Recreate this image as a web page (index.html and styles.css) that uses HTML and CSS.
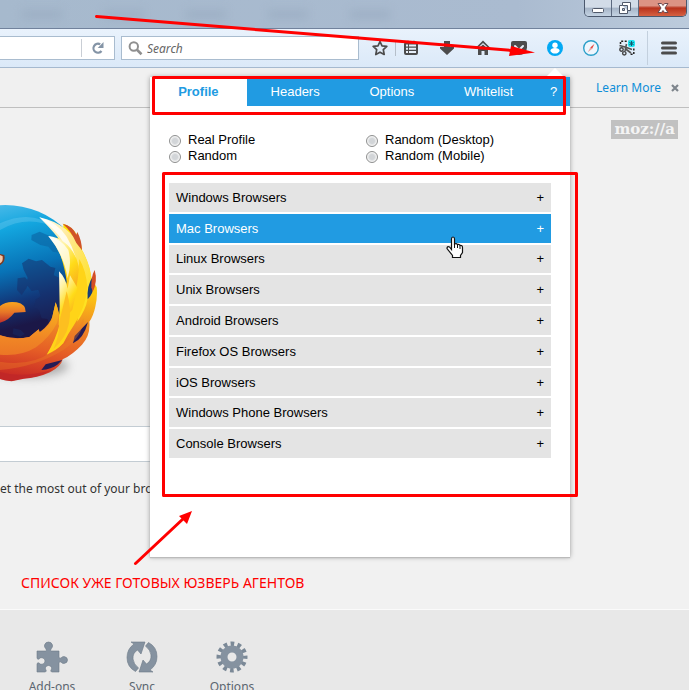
FILE: index.html
```html
<!DOCTYPE html>
<html lang="en">
<head>
<meta charset="utf-8">
<meta name="viewport" content="width=device-width, initial-scale=1">
<title>Mozilla Firefox Start Page</title>
<link rel="stylesheet" href="styles.css">
</head>
<body>
<div class="window">
  <div class="titlebar">
    <div class="ghosts" aria-hidden="true"><i></i><i></i><i></i><i></i><i></i></div>
    <div class="controls">
      <button class="control" aria-label="Minimize"><svg width="14" height="14" viewBox="0 0 14 14"><rect x="1.500" y="7.500" width="11" height="4" rx="1" fill="#fff" stroke="#50596a"/></svg></button>
      <button class="control" aria-label="Restore"><svg width="14" height="14" viewBox="0 0 14 14"><path d="M4.500 1.500h8v8h-3v3h-8v-8h3z" fill="#fff" stroke="#50596a"/><path d="M4.500 4.500h5v5M4.500 7.500h2v2h-2z" fill="#b7c6d8" stroke="#50596a"/></svg></button>
      <button class="control control-close" aria-label="Close"><svg width="14" height="14" viewBox="0 0 14 14"><path d="M2 2.500h3.500L7 4.500l1.500-2H12L9 7l3 4.500H8.500L7 9.500l-1.500 2H2L5 7z" fill="#fff" stroke="#6b4a50"/></svg></button>
    </div>
  </div>

  <nav class="toolbar" aria-label="Navigation">
    <div class="address">
      <input class="address-input" type="text" aria-label="Address">
      <button class="reload" aria-label="Reload"><svg width="14" height="14" viewBox="0 0 14 14"><path d="M10.500 10A4.500 4.500 0 1 1 9.200 3.300" fill="none" stroke="#8494a6" stroke-width="2.200"/><path d="M12.500 1v6H6.700z" fill="#8494a6"/></svg></button>
    </div>
    <div class="search">
      <svg width="15" height="15" viewBox="0 0 15 15"><circle cx="5.800" cy="5.500" r="4.200" fill="none" stroke="#8f8f8f" stroke-width="2"/><path d="M9 8.800l4.500 4.400" stroke="#8f8f8f" stroke-width="2.600"/></svg>
      <input class="search-input" type="text" placeholder="Search" aria-label="Search">
    </div>
    <button class="tool tool-star" aria-label="Bookmark"><svg width="16" height="16" viewBox="0 0 16 16"><path d="M8 1.500l2 4.300 4.800.6-3.500 3.300.9 4.800L8 12.200l-4.200 2.300.9-4.800L1.200 6.400 6 5.800z" fill="none" stroke="#4c4c4c" stroke-width="1.700" stroke-linejoin="round"/></svg></button>
    <span class="divider"></span>
    <button class="tool tool-list" aria-label="Bookmarks list"><svg width="16" height="16" viewBox="0 0 16 16"><path d="M3 2l2-1.500L7 2h2l2-1.500L13 2a2 2 0 0 1 2 2v9a2 2 0 0 1-2 2H3a2 2 0 0 1-2-2V4a2 2 0 0 1 2-2z" fill="#4c4c4c"/><path d="M3 4.500h2v2H3zM6 4.500h7v2H6zM3 7.700h2v2H3zM6 7.700h7v2H6zM3 11h2v2H3zM6 11h7v2H6z" fill="#e7f0fa"/></svg></button>
    <button class="tool" aria-label="Downloads"><svg width="16" height="16" viewBox="0 0 16 16"><path d="M5 1h6v6h4v1.500L8 15 1 8.500V7h4z" fill="#4c4c4c"/></svg></button>
    <button class="tool" aria-label="Home"><svg width="16" height="16" viewBox="0 0 16 16"><path d="M8 .5L15.500 8l-1 1L8 3 1.500 9l-1-1z" fill="#4c4c4c"/><path d="M8 4.500l5 4.500v6H9.500v-4h-3v4H3V9z" fill="#4c4c4c"/></svg></button>
    <button class="tool" aria-label="Pocket"><svg width="16" height="16" viewBox="0 0 16 16"><path d="M2 1h12a2 2 0 0 1 2 2v4.500a8 7.500 0 0 1-16 0V3a2 2 0 0 1 2-2z" fill="#4c4c4c"/><path d="M4 6l4 4 4-4" fill="none" stroke="#e7f0fa" stroke-width="2" stroke-linecap="round"/></svg></button>
    <button class="tool" aria-label="Agent profile"><svg width="16" height="16" viewBox="0 0 16 16"><circle cx="8" cy="8" r="8" fill="#03a9f4"/><circle cx="8" cy="5.300" r="2.700" fill="#fff"/><path d="M3.300 11c0-1.700 2.200-3 4.700-3s4.700 1.300 4.700 3c-1 1.600-2.700 2.600-4.700 2.600S4.300 12.600 3.300 11z" fill="#fff"/></svg></button>
    <button class="tool" aria-label="Compass"><svg width="16" height="16" viewBox="0 0 16 16"><circle cx="8" cy="8" r="7.300" fill="#eef6fd" stroke="#2b9fc9" stroke-width="1.400"/><path d="M11.500 3.800L9 9 7.300 7.600z" fill="#e4473d"/><path d="M7.300 7.600L9 9l-4.200 3.200z" fill="#e9a29d"/></svg></button>
    <button class="tool" aria-label="Capture"><svg width="16" height="16" viewBox="0 0 16 16"><path d="M1.500 4V1.200h8M14.800 8.500v5.800H11" fill="none" stroke="#222" stroke-width="1.500" stroke-dasharray="2 1.500"/><path d="M.5 5.500L6 7l7 2.500M7.500 4L6 11M6 8.500l6 4.500" stroke="#555" stroke-width="1.600"/><circle cx="2.500" cy="9.500" r="1.700" fill="none" stroke="#444" stroke-width="1.400"/><circle cx="5.300" cy="13.300" r="1.700" fill="none" stroke="#444" stroke-width="1.400"/><rect x="9" y="0" width="7" height="7" rx="2" fill="#19e5f2"/><path d="M12.500 1v5M10.300 2.300l4.400 2.500M14.700 2.300l-4.400 2.500" stroke="#17566a"/></svg></button>
    <span class="divider divider-menu"></span>
    <button class="tool tool-menu" aria-label="Menu"><svg width="16" height="14" viewBox="0 0 16 14"><path d="M1.500 2h13M1.500 7h13M1.500 12h13" stroke="#4c4c4c" stroke-width="3" stroke-linecap="round"/></svg></button>
  </nav>

  <div class="notice">
    <a class="notice-link" href="#">Learn More</a>
    <button class="notice-close" aria-label="Dismiss"><svg width="8" height="8" viewBox="0 0 8 8"><path d="M1 1l6 6M7 1L1 7" stroke="#7e858c" stroke-width="2.200"/></svg></button>
  </div>

  <main class="page">
    <div class="brand"><a class="mozilla" href="#">moz://a</a></div>
    <svg class="logo" width="110" height="190" viewBox="0 0 330 570" role="img" aria-label="Firefox">
      <defs>
        <linearGradient id="globe" x1="0" y1="0" x2=".25" y2="1"><stop offset="0" stop-color="#70c8f0"/><stop offset=".25" stop-color="#13a6df"/><stop offset=".48" stop-color="#0873b7"/><stop offset=".66" stop-color="#123779"/><stop offset=".8" stop-color="#1b1747"/></linearGradient>
        <linearGradient id="fur" gradientUnits="userSpaceOnUse" x1="240" y1="50" x2="170" y2="545"><stop offset="0" stop-color="#ffe900"/><stop offset=".45" stop-color="#fdc912"/><stop offset=".67" stop-color="#ee8425"/><stop offset=".83" stop-color="#e55d26"/><stop offset="1" stop-color="#c92b25"/></linearGradient>
        <linearGradient id="flame" x1="0" y1="0" x2=".5" y2="1"><stop offset="0" stop-color="#fff"/><stop offset=".3" stop-color="#fff3a5"/><stop offset=".65" stop-color="#ffdc19"/><stop offset="1" stop-color="#f9a91e"/></linearGradient>
        <linearGradient id="pale" x1="0" y1="0" x2="1" y2="1"><stop offset="0" stop-color="#fff"/><stop offset=".4" stop-color="#ffe78a"/><stop offset="1" stop-color="#fee000"/></linearGradient>
        <linearGradient id="amber" gradientUnits="userSpaceOnUse" x1="0" y1="330" x2="0" y2="500"><stop offset="0" stop-color="#f9b01e"/><stop offset=".5" stop-color="#f08625"/><stop offset="1" stop-color="#e86a26"/></linearGradient>
        <linearGradient id="nose" x1="0" y1="0" x2="0" y2="1"><stop offset="0" stop-color="#f8a51f"/><stop offset=".5" stop-color="#e67527"/><stop offset="1" stop-color="#bd2f2b"/></linearGradient>
        <filter id="soft" x="-30%" y="-80%" width="160%" height="260%"><feGaussianBlur stdDeviation="14"/></filter>
      </defs>
      <ellipse cx="80" cy="498" rx="125" ry="34" fill="#777" opacity=".55" filter="url(#soft)"/>
      <circle cx="16" cy="273" r="258" fill="url(#globe)"/>
      <path d="M0 70Q95 25 170 85 85 42 0 90z" fill="#7fd1f3" opacity=".3"/>
      <path d="M95 105l24-10 30 13 19 30 13 20-23-3-13-15-24-5-27-15z" fill="#0b6aa8" opacity=".7"/>
      <path d="M66 190l20-14 22 8 18-4 25 20 15 4-5 22 24 10-4 28 15 20-15 35-8 38-18 30-13-30-17-2-8-25-15-8 5-23 15-10-7-20-20 4-16-20 4-20-12-24zM53 235l22-3 13 15-9 18-14 20-14-15zM40 385l22 5 12 12-13 8-23-8z" fill="#172b65" opacity=".5"/>
      <path d="M190 71Q214 78 228 100 243 124 246 150 263 178 275 235L283 250 290 262Q293 290 286 320 280 348 268 365 272 405 246 434 218 464 188 478 183 500 150 517 110 535 72 536L35 544Q15 543 0 537V406Q43 420 88 411L116 388 119 397Q150 372 157 350L167 307 179 345 190 290 200 245Q196 210 180 160 160 110 190 90z" fill="url(#fur)"/>
      <path d="M118 52Q210 72 245 150 276 200 274 250 262 280 262 300 258 327 232 365 249 237 217 181 196 130 118 52z" fill="url(#pale)"/>
      <path d="M118 52Q175 70 200 110 218 140 228 175 205 155 192 130 165 85 118 52z" fill="#fff" opacity=".8"/>
      <path d="M145 108Q204 115 230 178 250 226 222 305L205 290 200 225Q188 160 145 108z" fill="url(#flame)"/>
      <path d="M145 108Q185 118 205 150 216 190 203 235 190 160 145 108z" fill="#fff" opacity=".7"/>
      <path d="M238 177Q260 214 262 265 256 325 222 375 205 400 190 430 170 452 140 464 167 420 180 370 235 303 238 177z" fill="#ffd418"/>
      <path d="M177 214Q196 232 203 266L210 226 232 263 217 329 176 376 179 320z" fill="url(#flame)"/>
      <path d="M200 274Q215 325 207 370 198 416 160 447 179 409 177 370z" fill="#fdbf20"/>
      <path d="M167 307Q181 340 171 369 151 410 108 442 63 470 0 464V406Q43 422 88 411L116 388 119 397Q155 374 157 350z" fill="url(#amber)"/>
      <path d="M188 71Q218 78 229 104L232 96Q245 120 246 151L229 129Q214 93 188 71z" fill="#cf5129"/>
      <path d="M278 230Q260 256 263 298 280 282 283 250z" fill="#173d79"/>
      <path d="M284 210Q273 230 274 262L278 275Q294 245 284 210z" fill="#d44e24"/>
      <path d="M264 366L224 408 219 430Q251 416 264 366zM187 480L137 493 124 510Q154 507 172 494z" fill="#261c55"/>
      <path d="M0 485Q93 500 155 455 213 432 251 355 250 410 190 450 110 500 0 510z" fill="#ef8126" opacity=".35"/>
      <path d="M0 516Q65 535 157 510 110 535 70 535L34 543 0 537z" fill="#bd252a" opacity=".6"/>
      <path d="M0 318Q20 302 50 307 78 313 77 336L43 338Q25 362 0 368z" fill="url(#nose)"/>
      <path d="M0 162l13 3q5 20-13 31z" fill="#7c3921"/><path d="M0 165l8 4q2 17-8 21z" fill="#f3c6a6"/>
    </svg>
    <div class="home-search"><input class="home-input" type="text" aria-label="Search the web"></div>
    <p class="snippet">et the most out of your browser</p>
    <p class="caption">СПИСОК УЖЕ ГОТОВЫХ ЮЗВЕРЬ АГЕНТОВ</p>
  </main>

  <footer class="launcher">
    <button class="launch"><svg width="32" height="32" viewBox="0 0 32 32"><path d="M1 10h8.500q1.500-.5.500-2-2-2-1.500-4Q9.500 1 12.500 1t4 3q.5 2-1.500 4-1 1.500.5 2H23v6q.3 2 2 1 1-1.500 3-1.500 3.500.500 3.500 3.500T28 22.500q-2 0-3-1.500-1.700-1-2 1v9h-7q-2-.5-1-2 1-1 .5-2.500-.8-2-3-2t-3 2q-.5 1.500.5 2.500 1 1.500-1 2H1v-8q.5-2 2-1 1.200 1.500 3 1.300 3-.5 3-3.300t-3-3.300Q4.200 16.500 3 18q-1.500 1-2-1z" fill="#8592a0" stroke="#6c7986" stroke-width=".6"/></svg>Add-ons</button>
    <button class="launch"><svg width="32" height="32" viewBox="0 0 32 32"><path d="M5 1h14l-4 12-3.500-4Q6.500 12 7 18q.5 5 5.500 9l-3 3.500Q1 26 1 16.500 1 8 8 3zM27 31H13l4-12 3.500 4Q25.500 20 25 14q-.5-5-5.500-9l3-3.500Q31 6 31 15.500 31 24 24 29z" fill="#8592a0" stroke="#6c7986" stroke-width=".6"/></svg>Sync</button>
    <button class="launch"><svg width="32" height="32" viewBox="0 0 32 32"><circle cx="16" cy="16" r="13" fill="none" stroke="#7b8997" stroke-width="5" stroke-dasharray="3.600 3.207" stroke-dashoffset="1.800"/><circle cx="16" cy="16" r="8" fill="none" stroke="#8592a0" stroke-width="7"/></svg>Options</button>
  </footer>

  <section class="popup" aria-label="User agent profile">
    <div class="tabs">
      <button class="tab tab-active">Profile</button>
      <button class="tab">Headers</button>
      <button class="tab">Options</button>
      <button class="tab">Whitelist</button>
      <button class="tab tab-help">?</button>
    </div>
    <div class="modes">
      <label class="mode"><input class="radio" type="radio" name="mode">Real Profile</label>
      <label class="mode"><input class="radio" type="radio" name="mode">Random (Desktop)</label>
      <label class="mode"><input class="radio" type="radio" name="mode">Random</label>
      <label class="mode"><input class="radio" type="radio" name="mode">Random (Mobile)</label>
    </div>
    <div class="groups">
      <button class="group">Windows Browsers<span>+</span></button>
      <button class="group group-hover">Mac Browsers<span>+</span></button>
      <button class="group">Linux Browsers<span>+</span></button>
      <button class="group">Unix Browsers<span>+</span></button>
      <button class="group">Android Browsers<span>+</span></button>
      <button class="group">Firefox OS Browsers<span>+</span></button>
      <button class="group">iOS Browsers<span>+</span></button>
      <button class="group">Windows Phone Browsers<span>+</span></button>
      <button class="group">Console Browsers<span>+</span></button>
    </div>
  </section>

  <svg class="marks" width="689" height="690" viewBox="0 0 689 690" aria-hidden="true">
    <g fill="none" stroke="#f00" stroke-width="3" stroke-linejoin="round" stroke-linecap="round">
      <rect x="153.500" y="77.500" width="411" height="36"/>
      <rect x="163.500" y="173.500" width="413" height="322"/>
      <path d="M96.500 16.500L512 50.500M135.500 563.500L184 518"/>
    </g>
    <path d="M535 52.500L509 56l2-10zM192 511l-5 13-8-8z" fill="#f00"/>
    <path d="M451.500 249.500V239q0-2 1.500-2t1.500 2v5q2-1 3 .5 2-.5 2.500 1 2.500-.5 2.500 2v5l-2 3v2h-8v-2l-5.500-7q0-2.500 2.500-1.500z" fill="#fff" stroke="#111" stroke-width="1.200"/>
    <path d="M454.500 243v5M457.500 244.500v3.500M460 246v3" stroke="#111"/>
  </svg>
</div>
</body>
</html>
```
FILE: styles.css
```css
* { box-sizing: border-box; }

body {
  margin: 0;
  background: #f1f1f1;
  color: #333;
  font-family: "Noto Sans", "Open Sans", sans-serif;
  font-size: 12px;
}

button {
  margin: 0;
  padding: 0;
  border: 0;
  background: none;
  color: inherit;
  font: inherit;
}

input { margin: 0; font: inherit; }
svg { display: block; flex: none; }

.window {
  position: relative;
  display: flex;
  flex-direction: column;
  height: 100vh;
  min-height: 600px;
  overflow: hidden;
}

/* Title bar */
.titlebar {
  display: flex;
  justify-content: space-between;
  flex: none;
  height: 29px;
  padding-right: 2px;
  border-bottom: 1px solid #71829c;
  background: linear-gradient(90deg, #a6b9cd 0%, #aabbd0 75%, #bccbdc 100%);
}

.ghosts {
  display: flex;
  flex: 1;
  gap: 42px;
  padding: 10px 22px;
  filter: blur(4px);
}

.ghosts i { width: 40px; height: 9px; background: #96a8bd; opacity: .5; }

.controls {
  display: flex;
  height: 17px;
  border: 1px solid #4b586d;
  border-top: 0;
  border-radius: 0 0 5px 5px;
  overflow: hidden;
}

.control {
  display: grid;
  place-items: center;
  width: 27px;
  border-right: 1px solid #5c6a80;
  background: linear-gradient(#d2dce8 0 45%, #a5b4c7 50%, #c4d3e3);
}

.control-close {
  width: 47px;
  border-right: 0;
  background: linear-gradient(#dc9384 0 35%, #b8321c 50%, #d66142);
}

/* Toolbar */
.toolbar {
  display: flex;
  align-items: center;
  flex: none;
  height: 39px;
  border-bottom: 1px solid #a5b9cf;
  background: linear-gradient(#e9f2fc, #dbe9f8);
}

.address, .search {
  display: flex;
  align-items: center;
  height: 24px;
  border: 1px solid #a9bccf;
  background: #fff;
}

.address { flex: 1; min-width: 60px; border-left: 0; }
.address-input { flex: 1; min-width: 0; border: 0; background: none; }

.reload {
  display: grid;
  place-items: center;
  width: 33px;
  height: 18px;
  border-left: 1px solid #c9ced5;
}

.search { flex: none; width: 238px; margin: 0 5px 0 6px; padding: 0 4px 0 6px; gap: 4px; }
.search-input { flex: 1; min-width: 0; padding: 0; border: 0; background: none; }
.search-input::placeholder { color: #666; font-style: italic; opacity: 1; }

.tool { display: grid; place-items: center; flex: none; width: 36px; height: 30px; }
.tool-star { width: 31px; }
.tool-list { width: 30px; margin-right: 3px; }
.tool-menu { width: 40px; }
.divider { flex: none; width: 1px; height: 16px; background: #b5bfca; }
.divider-menu { height: 34px; margin: 0 1px 0 2px; background: #c3d0de; }

/* Notification bar */
.notice {
  display: flex;
  align-items: center;
  justify-content: flex-end;
  flex: none;
  gap: 10px;
  height: 40px;
  padding-right: 10px;
  border-bottom: 1px solid #bfbfbf;
  background: #f0f0f0;
}

.notice-link { color: #0d8ed8; text-decoration: none; }

/* Start page */
.page { display: flex; flex-direction: column; flex: 1; min-height: 0; }
.brand { display: flex; justify-content: flex-end; padding: 12px 11px 61px; }

.mozilla {
  padding: 0 3px;
  background: #c1c1c1;
  color: #f4f4f4;
  font-family: "DejaVu Serif", serif;
  font-size: 15px;
  font-weight: bold;
  line-height: 19px;
  text-decoration: none;
}

.logo { margin-bottom: 36px; }

.home-search {
  flex: none;
  width: 460px;
  height: 36px;
  border: 1px solid #c3ccd3;
  border-left: 0;
  background: #fff;
}

.home-input { width: 100%; height: 100%; border: 0; background: none; }
.snippet { margin: 18px 0 0; line-height: 18px; white-space: nowrap; }
.caption { margin: 75px 0 0 21px; color: #f00; font-size: 14px; line-height: 20px; }

.launcher {
  display: flex;
  flex: none;
  height: 81px;
  padding: 31px 7px 0;
  border-top: 1px solid #fafafa;
  background: #e8e8e8;
}

.launch {
  display: flex;
  flex-direction: column;
  align-items: center;
  gap: 5px;
  width: 90px;
  height: 60px;
  color: #5b6670;
  line-height: 18px;
}

/* Extension popup */
.popup {
  position: absolute;
  top: 77px;
  right: 119px;
  width: 420px;
  height: 480px;
  background: #fff;
  box-shadow: 0 1px 1px #bbb, 0 0 5px rgba(0, 0, 0, .35);
  color: #000;
  font-family: "Liberation Sans", Arial, sans-serif;
  font-size: 13px;
}

.popup::before {
  content: "";
  position: absolute;
  right: 6px;
  bottom: 100%;
  width: 18px;
  height: 9px;
  background: #fff;
  clip-path: polygon(50% 0, 100% 100%, 0 100%);
}

.tabs { display: flex; height: 29px; background: #219be2; }
.tab { flex: 1; color: #fff; }
.tab-active { background: #fff; color: #219be2; font-weight: bold; }
.tab-help { flex: none; width: 33px; }

.modes {
  display: grid;
  grid-template-columns: 197px 1fr;
  padding: 26px 19px 19px;
}

.mode { display: flex; align-items: center; gap: 7px; line-height: 16px; }

.radio {
  appearance: none;
  width: 12px;
  height: 12px;
  border: 1px solid #8e8f8f;
  border-radius: 50%;
  background: radial-gradient(circle, #d2d5d8 0 35%, #f4f4f4 65%);
  transform: translateY(1px);
}

.groups {
  display: grid;
  grid-auto-rows: 1fr;
  gap: 2px;
  height: 275px;
  margin: 0 19px;
}

.group {
  display: flex;
  align-items: center;
  justify-content: space-between;
  padding: 0 7px;
  background: #e4e4e4;
}

.group-hover { background: #219be2; color: #fff; }

/* Annotation layer */
.marks { position: absolute; top: 0; right: 0; pointer-events: none; }
```
